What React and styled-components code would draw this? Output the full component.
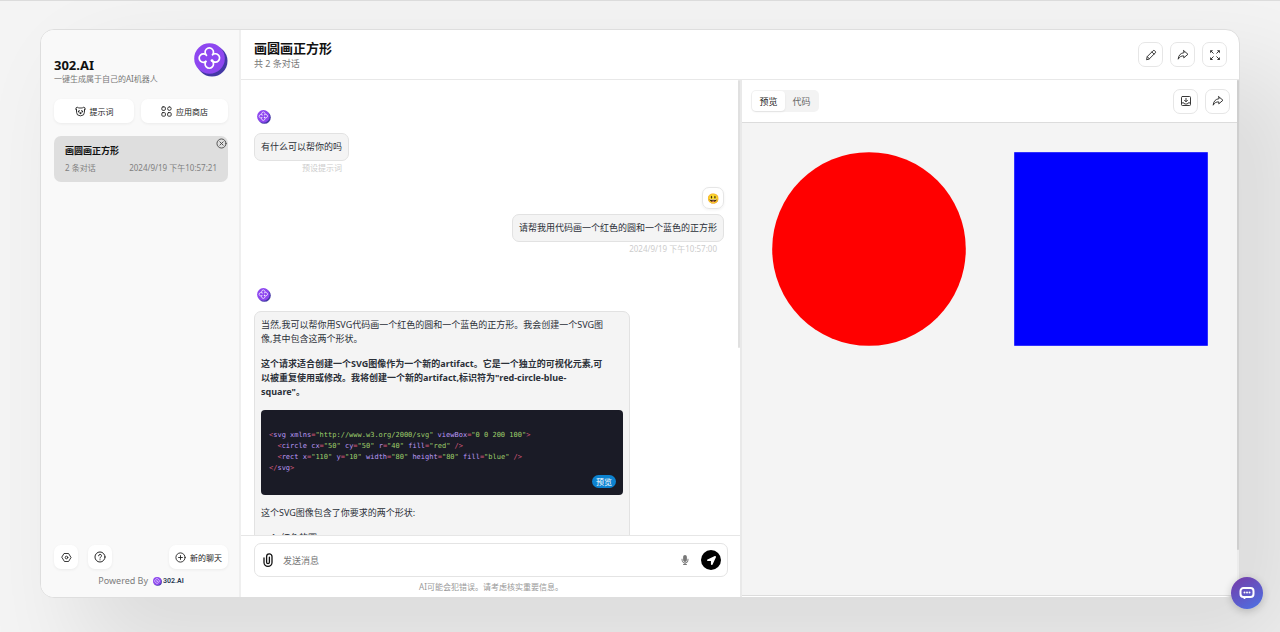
import React, { useState } from "react";
import styled, { createGlobalStyle } from "styled-components";
import { FaMicrophone, FaLocationArrow } from "react-icons/fa";

const GlobalStyle = createGlobalStyle`
  * {
    box-sizing: border-box;
  }
  body {
    margin: 0;
    background: #f4f4f4;
    color: #303030;
    font-family: "Noto Sans", "Noto Sans CJK SC", sans-serif;
    font-size: 9px;
    line-height: 14px;
  }
  button, input {
    font-family: inherit;
    color: inherit;
  }
  button {
    cursor: pointer;
  }
  h1, h2, h3, p, pre, ol {
    margin: 0;
  }
`;

const Page = styled.div`
  height: 100vh;
  padding: 28px 40px 34px;
  border-top: 1px solid #dcdcdc;
  overflow: hidden;
`;

const Window = styled.div`
  display: flex;
  height: 100%;
  border: 1px solid #dedede;
  border-radius: 14px;
  background: #fff;
  box-shadow: 50px 50px 100px 10px rgba(0, 0, 0, 0.1);
  overflow: hidden;
`;

/* sidebar */
const Sidebar = styled.aside`
  display: flex;
  flex-direction: column;
  flex: 0 0 200px;
  padding: 13px 11px 9px 13px;
  background: #f9f9f9;
  border-right: 2px solid #efefef;
`;

const Brand = styled.div`
  display: flex;
  justify-content: space-between;
  align-items: flex-start;
  margin-bottom: 14px;
`;

const BrandName = styled.h1`
  margin-top: 14px;
  font-size: 13px;
  line-height: 16px;
  font-weight: 700;
  color: #111;
`;

const BrandText = styled.p`
  font-size: 8px;
  line-height: 12px;
  color: #777;
  white-space: nowrap;
`;

const Row = styled.div`
  display: flex;
  align-items: center;
  justify-content: ${(p) => p.$justify || "flex-start"};
  gap: ${(p) => p.$gap || 7}px;
`;

const SideButton = styled.button`
  display: flex;
  align-items: center;
  justify-content: center;
  gap: 4px;
  flex: ${(p) => p.$grow || "none"};
  min-width: 24px;
  height: 24px;
  padding: 0 ${(p) => (p.$square ? 0 : 6)}px;
  border: 0;
  border-radius: 7px;
  background: #fff;
  box-shadow: 0 1px 3px rgba(0, 0, 0, 0.06);
  font-size: 8px;
  color: #222;
  white-space: nowrap;
`;

const ChatItem = styled.article`
  position: relative;
  margin-top: 13px;
  padding: 7px 11px;
  border-radius: 7px;
  background: #dedede;
`;

const ChatItemTitle = styled.h3`
  font-size: 9px;
  line-height: 16px;
  font-weight: 700;
  color: #111;
`;

const ChatItemInfo = styled.div`
  display: flex;
  justify-content: space-between;
  font-size: 8px;
  line-height: 15px;
  padding-top: 1px;
  color: #808080;
`;

const DeleteButton = styled.button`
  position: absolute;
  top: 2px;
  right: 1px;
  display: flex;
  padding: 0;
  border: 0;
  background: none;
  color: #444;
`;

const SideFooter = styled.footer`
  margin-top: auto;
`;

const Powered = styled.p`
  display: flex;
  align-items: center;
  justify-content: center;
  gap: 5px;
  margin-top: 5px;
  color: #7d7d7d;
`;

const PoweredLink = styled.a`
  display: flex;
  align-items: center;
  gap: 1px;
  color: #24364f;
  font-family: Roboto, sans-serif;
  font-size: 7px;
  font-weight: 600;
  text-decoration: none;
`;

/* main area */
const Main = styled.main`
  display: flex;
  flex-direction: column;
  flex: 1;
  min-width: 0;
`;

const Header = styled.header`
  display: flex;
  align-items: center;
  justify-content: space-between;
  height: 50px;
  padding: 0 12px 0 13px;
  border-bottom: 1px solid #e8e8e8;
`;

const Title = styled.h2`
  font-size: 13px;
  line-height: 17px;
  font-weight: 700;
  color: #111;
`;

const SubTitle = styled.p`
  line-height: 13px;
  color: #777;
`;

const IconButton = styled.button`
  display: flex;
  align-items: center;
  justify-content: center;
  width: 25px;
  height: 25px;
  padding: 0;
  border: 1px solid #e6e6e6;
  border-radius: 7px;
  background: #fff;
  color: #333;
`;

const Content = styled.div`
  display: flex;
  flex: 1;
  min-height: 0;
`;

const Chat = styled.section`
  display: flex;
  flex-direction: column;
  flex: 1 1 501px;
  min-width: 0;
  border-right: 2px solid #e9e9e9;
`;

const ScrollArea = styled.div`
  display: flex;
  flex: 1;
  min-height: 0;
`;

const Messages = styled.div`
  display: flex;
  flex-direction: column;
  flex: 1;
  min-width: 0;
  padding: 30px 14px 0 13px;
  overflow: hidden;
`;

const ScrollTrack = styled.div`
  flex: 0 0 2px;
  background: ${(p) => p.$track || "transparent"};
`;

const ScrollThumb = styled.div`
  height: ${(p) => p.$size};
  border-radius: 2px;
  background: ${(p) => p.$color || "#e0e0e0"};
`;

const Message = styled.div`
  display: flex;
  flex-direction: column;
  flex: none;
  align-items: ${(p) => (p.$user ? "flex-end" : "flex-start")};
  margin-bottom: ${(p) => (p.$last ? 0 : p.$user ? 33 : 13)}px;
`;

const BotAvatar = styled.div`
  display: flex;
  padding: 0 3px;
  margin-bottom: 9px;
`;

const UserAvatar = styled.div`
  display: flex;
  align-items: center;
  justify-content: center;
  width: 22px;
  height: 22px;
  margin-bottom: 5px;
  border: 1px solid #e6e6e6;
  border-radius: 7px;
  box-shadow: 0 1px 3px rgba(0, 0, 0, 0.06);
  font-size: 10px;
`;

const Body = styled.div`
  display: flex;
  flex-direction: column;
  width: ${(p) => (p.$wide ? "80%" : "auto")};
  max-width: 80%;
`;

const Bubble = styled.div`
  display: flex;
  flex-direction: column;
  gap: 11px;
  padding: 6px;
  border: 1px solid #e2e2e2;
  border-radius: 7px;
  background: #f4f4f4;
  color: #2b3038;
`;

const Meta = styled.span`
  padding: 0 7px;
  font-size: 8px;
  line-height: 13px;
  text-align: right;
  color: #ccc;
`;

const Strong = styled.p`
  font-weight: 700;
`;

const CodeBlock = styled.div`
  display: flex;
  flex-direction: column;
  height: 85px;
  padding: 20px 7px 7px 8px;
  border-radius: 4px;
  background: #1a1b26;
`;

const Code = styled.pre`
  font-family: "DejaVu Sans Mono", monospace;
  font-size: 7px;
  line-height: 11px;
  color: #bb9af7;
`;

const Punct = styled.span`
  color: #d6597a;
`;

const Str = styled.span`
  color: #9ece6a;
`;

const PreviewTag = styled.button`
  align-self: flex-end;
  margin-top: auto;
  padding: 0 4px;
  border: 0;
  border-radius: 7px;
  background: #0d83d0;
  color: #fff;
  font-size: 8px;
  line-height: 13px;
`;

const List = styled.ol`
  padding-left: 20px;
`;

const InputPanel = styled.form`
  padding: 7px 12px 3px 13px;
  border-top: 1px solid #e6e6e6;
`;

const InputBox = styled.div`
  display: flex;
  align-items: center;
  height: 34px;
  padding: 0 6px 0 8px;
  border: 1px solid #e4e4e4;
  border-radius: 7px;
`;

const PlainButton = styled.button`
  display: flex;
  padding: 0;
  border: 0;
  background: none;
  color: ${(p) => p.$color || "#111"};
`;

const TextInput = styled.input`
  flex: 1;
  min-width: 0;
  margin: 0 10px;
  padding: 0;
  border: 0;
  outline: 0;
  background: none;
  font-size: 9px;
  &::placeholder {
    color: #777;
  }
`;

const SendButton = styled.button`
  display: flex;
  align-items: center;
  justify-content: center;
  width: 20px;
  height: 20px;
  margin-left: 11px;
  padding: 0;
  border: 0;
  border-radius: 50%;
  background: #000;
  color: #fff;
`;

const Notice = styled.p`
  margin-top: 3px;
  font-size: 8px;
  text-align: center;
  color: #999;
`;

/* preview */
const Preview = styled.section`
  display: flex;
  flex: 1 1 497px;
  min-width: 0;
`;

const PreviewInner = styled.div`
  display: flex;
  flex-direction: column;
  flex: 1;
  min-width: 0;
`;

const PreviewHeader = styled.div`
  display: flex;
  align-items: center;
  justify-content: space-between;
  height: 42px;
  padding: 0 7px 0 9px;
`;

const Tabs = styled.div`
  display: flex;
  padding: 1px;
  border-radius: 5px;
  background: #f3f3f3;
`;

const Tab = styled.button`
  width: 33px;
  height: 20px;
  padding: 0;
  border: 0;
  border-radius: 4px;
  background: ${(p) => (p.$active ? "#fff" : "transparent")};
  box-shadow: ${(p) => (p.$active ? "0 1px 2px rgba(0, 0, 0, 0.08)" : "none")};
  font-size: 9px;
  color: ${(p) => (p.$active ? "#222" : "#666")};
`;

const Frame = styled.div`
  flex: 1;
  min-height: 0;
  margin-bottom: 1px;
  padding: 5px 5px 0 6px;
  border: solid #dcdcdc;
  border-width: 1px 0;
  background: #f4f4f4;
  overflow: hidden;
`;

const Drawing = styled.svg`
  display: block;
  width: 100%;
`;

const FloatButton = styled.button`
  position: fixed;
  right: 17px;
  bottom: 23px;
  display: flex;
  align-items: center;
  justify-content: center;
  width: 32px;
  height: 32px;
  padding: 0;
  border: 0;
  border-radius: 50%;
  background: linear-gradient(150deg, #773aa6, #4b74e6);
  box-shadow: 0 2px 8px rgba(0, 0, 0, 0.2);
`;

const Logo = ({ size }) => (
  <svg width={size} height={size} viewBox="0 0 34 34">
    <circle cx="18" cy="18" r="15.5" fill="#4338a5" />
    <circle cx="15.5" cy="15.5" r="15.3" fill="#8e47f0" />
    <path
      d="M12.5 12.3A4.2 4.2 0 1 1 18.1 12.3A4.2 4.2 0 1 1 18.3 17.8M18.1 17.9A4.2 4.2 0 1 1 12.5 17.9A4.2 4.2 0 1 1 12.5 12.3"
      fill="none"
      stroke="#fff"
      strokeWidth="1.7"
      strokeLinecap="round"
    />
    <circle cx="18" cy="17.6" r="1.4" fill="#fff" />
  </svg>
);

const Icon = ({ size = 11, children }) => (
  <svg
    width={size}
    height={size}
    viewBox="0 0 16 16"
    fill="none"
    stroke="currentColor"
    strokeWidth="1.3"
    strokeLinecap="round"
    strokeLinejoin="round"
  >
    {children}
  </svg>
);

const MaskIcon = () => (
  <Icon size={11}>
    <path d="M2.2 6.800C.4 4.800 1 1.800 3.200 1.800c1 0 1.600.4 2.200 1.100h5.200c.6-.7 1.200-1.100 2.200-1.100 2.200 0 2.800 3 1 5" />
    <path d="M2.200 4.500V9a5.800 5.300 0 0 0 11.600 0V4.500" />
    <path d="M4.800 8.600l1.400-1.800M11.200 8.600L9.800 6.800M7 10h2l-1 1.200z" strokeWidth="1.600" />
  </Icon>
);

const AppsIcon = () => (
  <Icon size={11}>
    <rect x="1.200" y="1.200" width="5.200" height="5.200" rx="1.800" />
    <rect x="9.600" y="1.200" width="5.200" height="5.200" rx="2.600" />
    <rect x="1.200" y="9.600" width="5.200" height="5.200" rx="1.500" />
    <rect x="9.600" y="9.600" width="5.200" height="5.200" rx="1.500" />
  </Icon>
);

const CloseIcon = () => (
  <Icon>
    <circle cx="8" cy="8" r="6.600" />
    <path d="M5.600 5.600l4.800 4.800M10.400 5.600l-4.800 4.800" />
  </Icon>
);

const SettingIcon = () => (
  <Icon>
    <path d="M5 2.200h6L14.600 8 11 13.800H5L1.400 8z" />
    <circle cx="8" cy="8" r="1.900" />
  </Icon>
);

const HelpIcon = () => (
  <Icon size={12}>
    <circle cx="8" cy="8" r="6.700" />
    <path d="M6.200 6.400a1.900 1.900 0 1 1 2.700 1.700c-.6.300-.9.700-.9 1.300M8 11.600v.2" />
  </Icon>
);

const AddIcon = () => (
  <Icon>
    <circle cx="8" cy="8" r="6.700" />
    <path d="M8 5.200v5.600M5.200 8h5.600" />
  </Icon>
);

const EditIcon = () => (
  <Icon size={12}>
    <path d="M2.200 13.800l.7-3.600L10.800 2.300a1.500 1.500 0 0 1 2.100 0l.8.8a1.500 1.500 0 0 1 0 2.100L5.800 13.100z" />
    <path d="M9.200 4l2.800 2.800M3 10.300l2.800 2.700" />
  </Icon>
);

const ShareIcon = () => (
  <Icon size={12}>
    <path d="M9 2.200L14.600 7 9 11.800V9.200C5.600 9 3.300 10.400 1.600 13.600 1.800 8.800 4.600 5.400 9 4.900z" />
  </Icon>
);

const DownloadIcon = () => (
  <Icon size={12}>
    <rect x="2" y="2" width="12" height="12" rx="1.200" />
    <path d="M8 4.500v4.300M6 7l2 2 2-2M2.200 10.500h3l1 1.500h3.600l1-1.500h3" />
  </Icon>
);

const FullscreenIcon = () => (
  <Icon size={12}>
    <path
      d="M1.500 1.500h4l-4 4zM14.500 1.500h-4l4 4zM14.500 14.500h-4l4-4zM1.500 14.500h4l-4-4z"
      fill="currentColor"
      stroke="none"
    />
    <path d="M3 3l2.700 2.700M13 3l-2.700 2.700M13 13l-2.700-2.700M3 13l2.700-2.700" />
  </Icon>
);

const ClipIcon = () => (
  <svg
    width="10"
    height="14"
    viewBox="0 0 10 14"
    fill="none"
    stroke="currentColor"
    strokeWidth="1.3"
    strokeLinecap="round"
  >
    <path d="M1 5v4.500a4 3.800 0 0 0 8 0V3.500a2.700 2.700 0 0 0-5.400 0v5.800a1.400 1.400 0 0 0 2.800 0V4.200" />
  </svg>
);

const BubbleIcon = () => (
  <svg width="16" height="14" viewBox="0 0 16 14">
    <path
      d="M4.500 2h7A3 3 0 0 1 14.500 5v3a3 3 0 0 1-3 3H6.500L5.400 12V11H4.500a3 3 0 0 1-3-3V5a3 3 0 0 1 3-3z"
      fill="none"
      stroke="#fff"
      strokeWidth="2"
      strokeLinejoin="round"
    />
    <circle cx="5.500" cy="6.500" r="1" fill="#fff" />
    <circle cx="8" cy="6.500" r="1" fill="#fff" />
    <circle cx="10.500" cy="6.500" r="1" fill="#fff" />
  </svg>
);

const Attr = ({ name, value }) => (
  <>
    {" " + name}
    <Punct>=</Punct>
    <Str>"{value}"</Str>
  </>
);

const App = () => {
  const [tab, setTab] = useState("preview");
  const [text, setText] = useState("");

  return (
    <>
      <GlobalStyle />
      <Page>
        <Window>
          <Sidebar>
            <Brand>
              <div>
                <BrandName>302.AI</BrandName>
                <BrandText>一键生成属于自己的AI机器人</BrandText>
              </div>
              <Logo size={34} />
            </Brand>
            <Row>
              <SideButton $grow="10">
                <MaskIcon />
                提示词
              </SideButton>
              <SideButton $grow="11">
                <AppsIcon />
                应用商店
              </SideButton>
            </Row>
            <ChatItem>
              <ChatItemTitle>画圆画正方形</ChatItemTitle>
              <ChatItemInfo>
                <span>2 条对话</span>
                <span>2024/9/19 下午10:57:21</span>
              </ChatItemInfo>
              <DeleteButton aria-label="删除">
                <CloseIcon />
              </DeleteButton>
            </ChatItem>
            <SideFooter>
              <Row $justify="space-between">
                <Row $gap={10}>
                  <SideButton $square aria-label="设置">
                    <SettingIcon />
                  </SideButton>
                  <SideButton $square aria-label="帮助">
                    <HelpIcon />
                  </SideButton>
                </Row>
                <SideButton>
                  <AddIcon />
                  新的聊天
                </SideButton>
              </Row>
              <Powered>
                Powered By
                <PoweredLink href="#">
                  <Logo size={9} />
                  302.AI
                </PoweredLink>
              </Powered>
            </SideFooter>
          </Sidebar>

          <Main>
            <Header>
              <div>
                <Title>画圆画正方形</Title>
                <SubTitle>共 2 条对话</SubTitle>
              </div>
              <Row>
                <IconButton aria-label="编辑">
                  <EditIcon />
                </IconButton>
                <IconButton aria-label="分享">
                  <ShareIcon />
                </IconButton>
                <IconButton aria-label="全屏">
                  <FullscreenIcon />
                </IconButton>
              </Row>
            </Header>

            <Content>
              <Chat>
                <ScrollArea>
                  <Messages>
                    <Message>
                      <BotAvatar>
                        <Logo size={14} />
                      </BotAvatar>
                      <Body>
                        <Bubble>
                          <p>有什么可以帮你的吗</p>
                        </Bubble>
                        <Meta>预设提示词</Meta>
                      </Body>
                    </Message>

                    <Message $user>
                      <UserAvatar>😃</UserAvatar>
                      <Body>
                        <Bubble>
                          <p>请帮我用代码画一个红色的圆和一个蓝色的正方形</p>
                        </Bubble>
                        <Meta>2024/9/19 下午10:57:00</Meta>
                      </Body>
                    </Message>

                    <Message $last>
                      <BotAvatar>
                        <Logo size={14} />
                      </BotAvatar>
                      <Body $wide>
                        <Bubble>
                          <p>
                            当然,我可以帮你用SVG代码画一个红色的圆和一个蓝色的正方形。我会创建一个SVG图
                            <br />
                            像,其中包含这两个形状。
                          </p>
                          <Strong>
                            这个请求适合创建一个SVG图像作为一个新的artifact。它是一个独立的可视化元素,可
                            <br />
                            以被重复使用或修改。我将创建一个新的artifact,标识符为"red-circle-blue-
                            <br />
                            square"。
                          </Strong>
                          <CodeBlock>
                            <Code>
                              <Punct>&lt;</Punct>svg
                              <Attr
                                name="xmlns"
                                value="http://www.w3.org/2000/svg"
                              />
                              <Attr name="viewBox" value="0 0 200 100" />
                              <Punct>&gt;</Punct>
                              {"\n  "}
                              <Punct>&lt;</Punct>circle
                              <Attr name="cx" value="50" />
                              <Attr name="cy" value="50" />
                              <Attr name="r" value="40" />
                              <Attr name="fill" value="red" />
                              <Punct> /&gt;</Punct>
                              {"\n  "}
                              <Punct>&lt;</Punct>rect
                              <Attr name="x" value="110" />
                              <Attr name="y" value="10" />
                              <Attr name="width" value="80" />
                              <Attr name="height" value="80" />
                              <Attr name="fill" value="blue" />
                              <Punct> /&gt;</Punct>
                              {"\n"}
                              <Punct>&lt;/</Punct>svg<Punct>&gt;</Punct>
                            </Code>
                            <PreviewTag>预览</PreviewTag>
                          </CodeBlock>
                          <p>这个SVG图像包含了你要求的两个形状:</p>
                          <List>
                            <li>红色的圆</li>
                          </List>
                        </Bubble>
                      </Body>
                    </Message>
                  </Messages>
                  <ScrollTrack>
                    <ScrollThumb $size="59%" />
                  </ScrollTrack>
                </ScrollArea>

                <InputPanel onSubmit={(e) => e.preventDefault()}>
                  <InputBox>
                    <PlainButton type="button" aria-label="附件">
                      <ClipIcon />
                    </PlainButton>
                    <TextInput
                      aria-label="发送消息"
                      placeholder="发送消息"
                      value={text}
                      onChange={(e) => setText(e.target.value)}
                    />
                    <PlainButton type="button" aria-label="语音" $color="#777">
                      <FaMicrophone size={10} />
                    </PlainButton>
                    <SendButton aria-label="发送">
                      <FaLocationArrow size={9} />
                    </SendButton>
                  </InputBox>
                  <Notice>AI可能会犯错误。请考虑核实重要信息。</Notice>
                </InputPanel>
              </Chat>

              <Preview>
                <PreviewInner>
                  <PreviewHeader>
                    <Tabs>
                      <Tab
                        $active={tab === "preview"}
                        onClick={() => setTab("preview")}
                      >
                        预览
                      </Tab>
                      <Tab
                        $active={tab === "code"}
                        onClick={() => setTab("code")}
                      >
                        代码
                      </Tab>
                    </Tabs>
                    <Row>
                      <IconButton aria-label="下载">
                        <DownloadIcon />
                      </IconButton>
                      <IconButton aria-label="分享">
                        <ShareIcon />
                      </IconButton>
                    </Row>
                  </PreviewHeader>
                  <Frame>
                    <Drawing viewBox="0 0 200 100">
                      <circle cx="50" cy="50" r="40" fill="red" />
                      <rect x="110" y="10" width="80" height="80" fill="blue" />
                    </Drawing>
                  </Frame>
                </PreviewInner>
                <ScrollTrack $track="#ececec">
                  <ScrollThumb $size="91%" $color="#cfcfcf" />
                </ScrollTrack>
              </Preview>
            </Content>
          </Main>
        </Window>
        <FloatButton aria-label="客服">
          <BubbleIcon />
        </FloatButton>
      </Page>
    </>
  );
};

export default App;
